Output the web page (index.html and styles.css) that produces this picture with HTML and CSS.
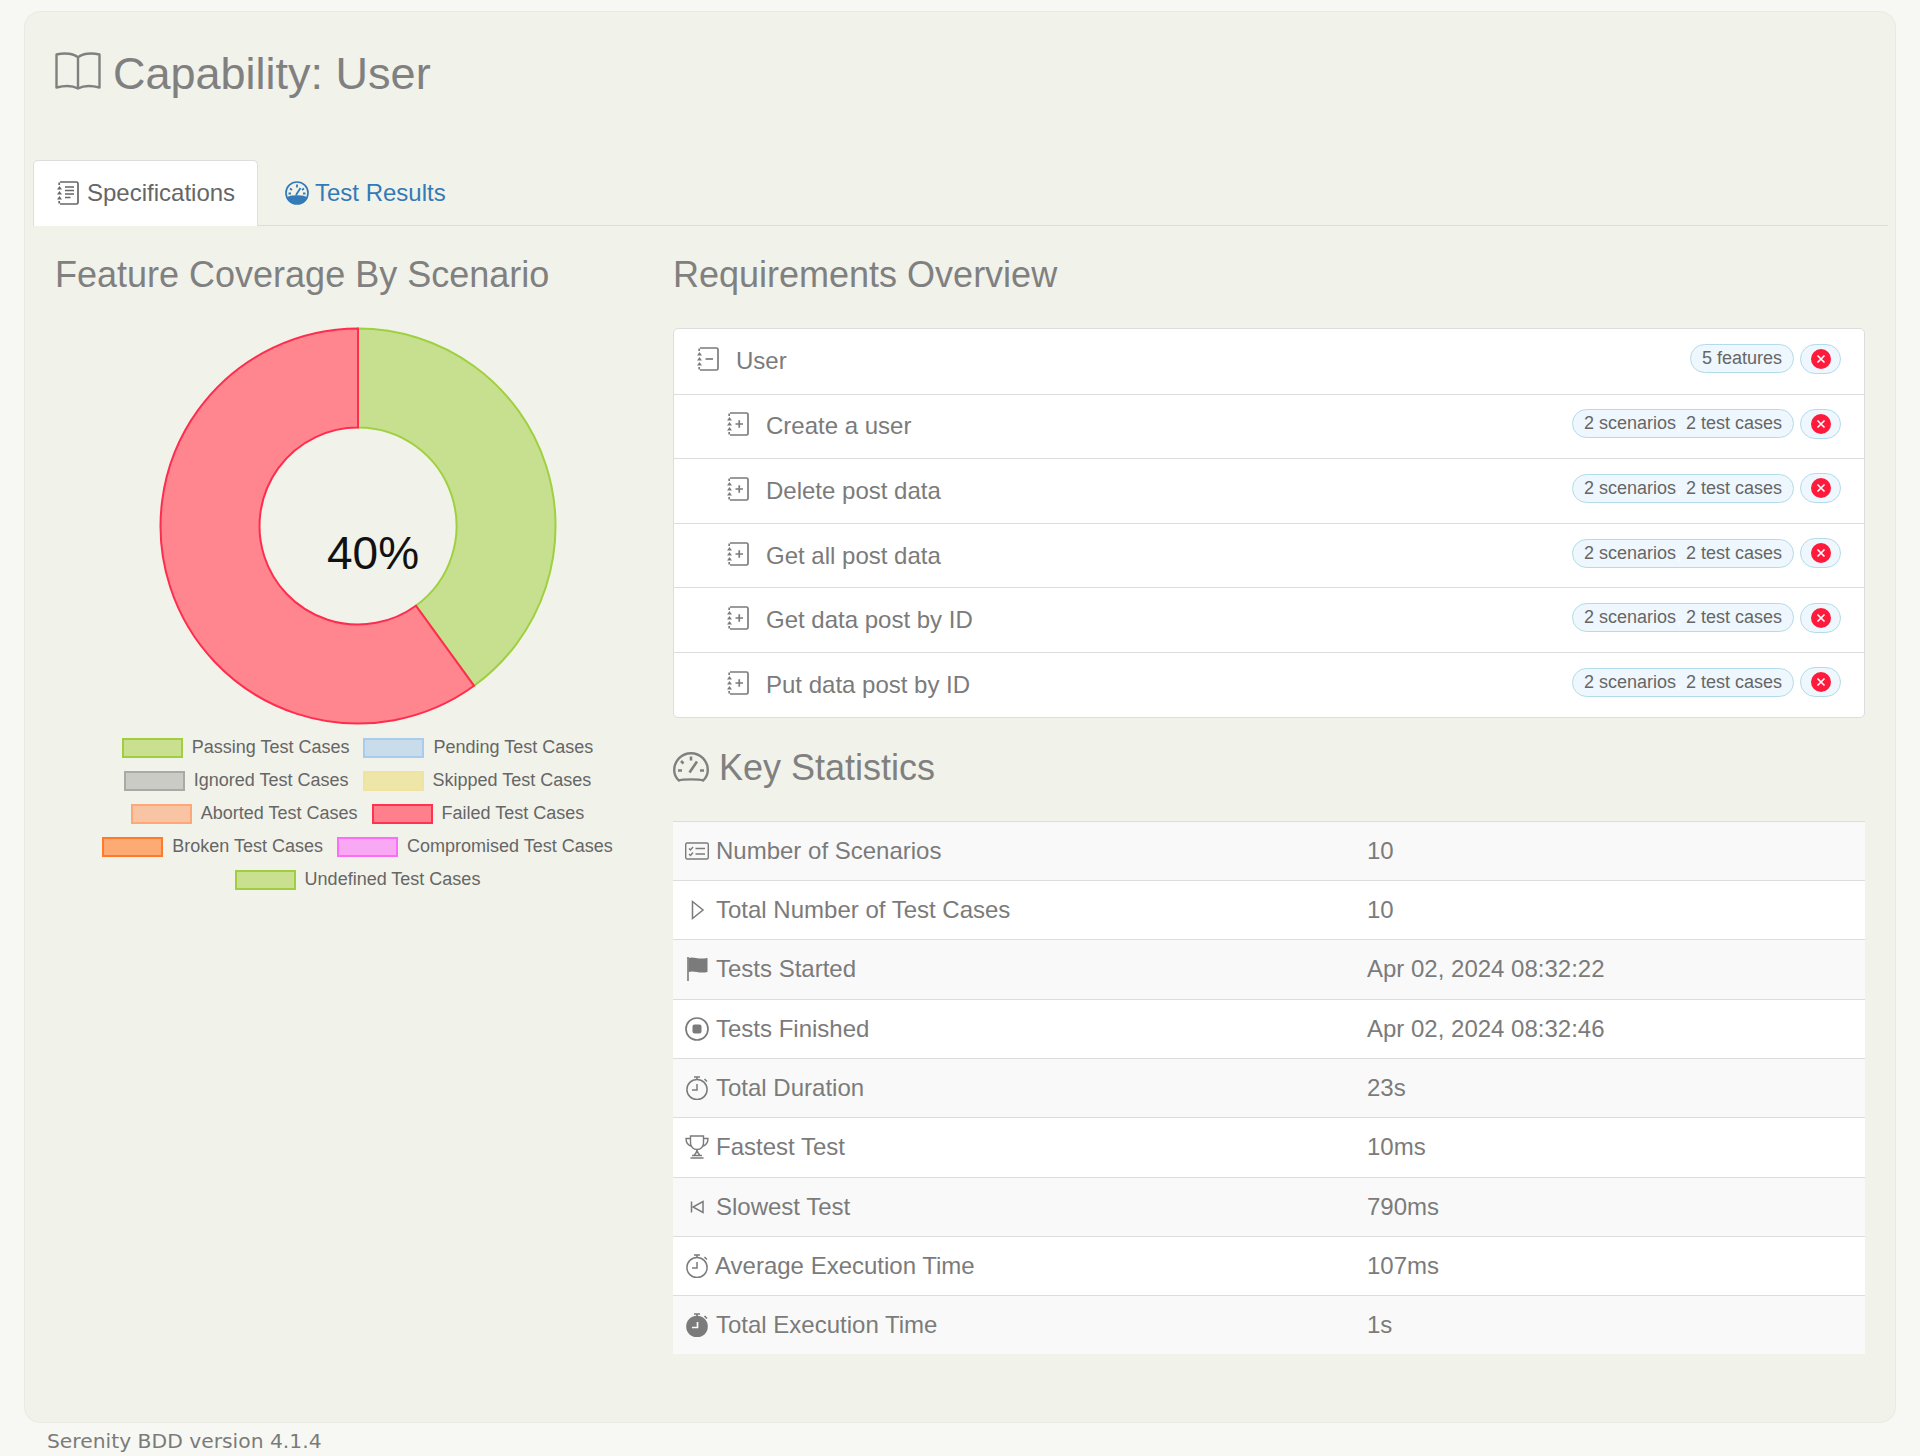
FILE: index.html

```html
<!DOCTYPE html>
<html lang="en">

<head>
    <meta charset="UTF-8">
    <meta name="viewport" content="width=device-width, initial-scale=1.0">
    <title>Capability: User</title>
    <link rel="stylesheet" href="styles.css">
</head>

<body>
    <svg class="sprite" width="0" height="0">
        <symbol id="bookBase" viewBox="0 0 22 24">
            <path d="M3 1h16.500A1.500 1.500 0 0 1 21 2.500v19a1.500 1.500 0 0 1-1.500 1.500H3M2.200 1.500v2.500M2.200 20v2.500" fill="none" stroke="currentColor" stroke-width="1.700" />
            <path d="M0 8.500l2.500-3.500 2.500 3.500zM0 13.500l2.500-3.500 2.500 3.500zM0 18.500l2.500-3.500 2.500 3.500z" fill="currentColor" />
        </symbol>
        <symbol id="bookPlus" viewBox="0 0 22 24">
            <use href="#bookBase" width="22" height="24" />
            <path d="M8.500 12h7.500M12.250 8.250v7.500" fill="none" stroke="currentColor" stroke-width="1.700" />
        </symbol>
        <symbol id="bookMinus" viewBox="0 0 22 24">
            <use href="#bookBase" width="22" height="24" />
            <path d="M8.500 12h7.500" fill="none" stroke="currentColor" stroke-width="1.700" />
        </symbol>
        <symbol id="failed" viewBox="0 0 20 20">
            <circle cx="10" cy="10" r="10" fill="#ff1a3c" />
            <path d="M6.500 6.500l7 7M13.500 6.500l-7 7" stroke="#fff" stroke-width="1.600" />
        </symbol>
        <symbol id="stopwatch" viewBox="0 0 24 24">
            <circle cx="12" cy="13.500" r="10.100" fill="none" stroke="currentColor" stroke-width="1.500" />
            <path d="M12 8v6H7M9 1h6M12 1v2.500M19.500 3l2.500 2.500" fill="none" stroke="currentColor" stroke-width="1.500" />
        </symbol>
    </svg>

    <main class="panel">
        <h1 class="page-title">
            <svg class="icon-title" viewBox="0 0 46 38">
                <path d="M23 5.500C19 1.500 10 0.500 1.500 2.500v33c8-2 16-2 21.500 1 5.500-3 13.500-3 21.500-1v-33C36 0.500 27 1.500 23 5.500zm0 0v31" fill="none" stroke="currentColor" stroke-width="2.400" stroke-linejoin="round" />
            </svg>
            Capability: User
        </h1>

        <nav class="tabs">
            <a class="tab active">
                <svg class="icon-notes" viewBox="0 0 22 24">
                    <path d="M3 1h16.500A1.500 1.500 0 0 1 21 2.500v19a1.500 1.500 0 0 1-1.500 1.500H3M2.200 1.500v2.500M2.200 20v2.500" fill="none" stroke="currentColor" stroke-width="1.700" />
                    <path d="M0 8.500l2.500-3.500 2.500 3.500zM0 13.500l2.500-3.500 2.500 3.500zM0 18.500l2.500-3.500 2.500 3.500z" fill="currentColor" />
                    <path d="M8 6h9M8 9.500h9M8 13h9M8 16.500h5.500" fill="none" stroke="currentColor" stroke-width="1.500" />
                </svg>
                Specifications
            </a>
            <a class="tab">
                <svg class="icon-tab" viewBox="0 0 24 24">
                    <circle cx="12" cy="12" r="11" fill="none" stroke="currentColor" stroke-width="1.700" />
                    <path d="M1.500 16.500c3-3 18-3 21 0A11 11 0 0 1 12 23 11 11 0 0 1 1.500 16.500z" fill="currentColor" />
                    <path d="M12 3.500v3M5 7.500l2 1.500M19 7.500l-2 1.500M3.500 12.500H6M20.500 12.500H18M11 14l4.500-7" fill="none" stroke="currentColor" stroke-width="1.800" />
                </svg>
                Test Results
            </a>
        </nav>

        <div class="columns">
            <section class="coverage">
                <h2>Feature Coverage By Scenario</h2>
                <div class="chart">
                    <svg width="400" height="400" viewBox="0 0 400 400">
                        <path class="slice-pass" d="M200 2.500A197.500 197.500 0 0 1 316.100 359.800L257.900 279.700A98.500 98.500 0 0 0 200 101.500z" />
                        <path class="slice-fail" d="M316.100 359.800A197.500 197.500 0 1 1 200 2.500V101.500A98.500 98.500 0 1 0 257.900 279.700z" />
                    </svg>
                    <span class="chart-label">40%</span>
                </div>
                <div class="legend">
                    <div class="legend-row">
                        <span class="legend-item"><i class="swatch passing"></i>Passing Test Cases</span>
                        <span class="legend-item"><i class="swatch pending"></i>Pending Test Cases</span>
                    </div>
                    <div class="legend-row">
                        <span class="legend-item"><i class="swatch ignored"></i>Ignored Test Cases</span>
                        <span class="legend-item"><i class="swatch skipped"></i>Skipped Test Cases</span>
                    </div>
                    <div class="legend-row">
                        <span class="legend-item"><i class="swatch aborted"></i>Aborted Test Cases</span>
                        <span class="legend-item"><i class="swatch failed"></i>Failed Test Cases</span>
                    </div>
                    <div class="legend-row">
                        <span class="legend-item"><i class="swatch broken"></i>Broken Test Cases</span>
                        <span class="legend-item"><i class="swatch compromised"></i>Compromised Test Cases</span>
                    </div>
                    <div class="legend-row">
                        <span class="legend-item"><i class="swatch passing"></i>Undefined Test Cases</span>
                    </div>
                </div>
            </section>

            <section class="overview">
                <h2>Requirements Overview</h2>
                <ul class="tree">
                    <li class="tree-row">
                        <svg class="icon-book"><use href="#bookMinus" /></svg>
                        <span class="tree-name">User</span>
                        <span class="pill">5 features</span>
                        <span class="pill pill-status"><svg class="icon-failed"><use href="#failed" /></svg></span>
                    </li>
                    <li class="tree-row child">
                        <svg class="icon-book"><use href="#bookPlus" /></svg>
                        <span class="tree-name">Create a user</span>
                        <span class="pill">2 scenarios<span class="comma">, </span>2 test cases</span>
                        <span class="pill pill-status"><svg class="icon-failed"><use href="#failed" /></svg></span>
                    </li>
                    <li class="tree-row child">
                        <svg class="icon-book"><use href="#bookPlus" /></svg>
                        <span class="tree-name">Delete post data</span>
                        <span class="pill">2 scenarios<span class="comma">, </span>2 test cases</span>
                        <span class="pill pill-status"><svg class="icon-failed"><use href="#failed" /></svg></span>
                    </li>
                    <li class="tree-row child">
                        <svg class="icon-book"><use href="#bookPlus" /></svg>
                        <span class="tree-name">Get all post data</span>
                        <span class="pill">2 scenarios<span class="comma">, </span>2 test cases</span>
                        <span class="pill pill-status"><svg class="icon-failed"><use href="#failed" /></svg></span>
                    </li>
                    <li class="tree-row child">
                        <svg class="icon-book"><use href="#bookPlus" /></svg>
                        <span class="tree-name">Get data post by ID</span>
                        <span class="pill">2 scenarios<span class="comma">, </span>2 test cases</span>
                        <span class="pill pill-status"><svg class="icon-failed"><use href="#failed" /></svg></span>
                    </li>
                    <li class="tree-row child">
                        <svg class="icon-book"><use href="#bookPlus" /></svg>
                        <span class="tree-name">Put data post by ID</span>
                        <span class="pill">2 scenarios<span class="comma">, </span>2 test cases</span>
                        <span class="pill pill-status"><svg class="icon-failed"><use href="#failed" /></svg></span>
                    </li>
                </ul>

                <h2 class="stats-title">
                    <svg class="icon-gauge" viewBox="0 0 36 30">
                        <path d="M6 28.500C3 26 1.200 22 1.200 18a16.800 16.800 0 0 1 33.600 0c0 4-1.800 8-4.800 10.500-3-1.500-21-1.500-24 0z" fill="none" stroke="currentColor" stroke-width="2.400" />
                        <path d="M18 4.500v4M8 9l2.500 2.500M5 18.500h4M27 18.500h4M16.500 20.500L24 9.500" fill="none" stroke="currentColor" stroke-width="2.600" />
                    </svg>
                    Key Statistics
                </h2>
                <div class="stats">
                    <div class="stat-row">
                        <span class="stat-name">
                            <svg class="icon-stat" viewBox="0 0 24 24">
                                <rect x="0.700" y="4" width="22.600" height="16" rx="1.500" fill="none" stroke="currentColor" stroke-width="1.400" />
                                <path d="M4 9.500l1.500 1.500 2.500-3M4 15l1.500 1.500 2.500-3M10.500 9.500h9.500M10.500 15h9.500" fill="none" stroke="currentColor" stroke-width="1.400" />
                            </svg>
                            Number of Scenarios
                        </span>
                        <span>10</span>
                    </div>
                    <div class="stat-row">
                        <span class="stat-name">
                            <svg class="icon-stat" viewBox="0 0 24 24">
                                <path d="M7.500 3.500L18 12 7.500 20.500z" fill="none" stroke="currentColor" stroke-width="1.500" />
                            </svg>
                            Total Number of Test Cases
                        </span>
                        <span>10</span>
                    </div>
                    <div class="stat-row">
                        <span class="stat-name">
                            <svg class="icon-stat" viewBox="0 0 24 24">
                                <path d="M3 0v24" stroke="currentColor" stroke-width="1.600" />
                                <path d="M3.500 1c6-2 8 2 19 0v14c-9 2-13-2-19 0z" fill="currentColor" />
                            </svg>
                            Tests Started
                        </span>
                        <span>Apr 02, 2024 08:32:22</span>
                    </div>
                    <div class="stat-row">
                        <span class="stat-name">
                            <svg class="icon-stat" viewBox="0 0 24 24">
                                <circle cx="12" cy="12" r="11" fill="none" stroke="currentColor" stroke-width="1.700" />
                                <rect x="7.500" y="7.500" width="9" height="9" rx="2" fill="currentColor" />
                            </svg>
                            Tests Finished
                        </span>
                        <span>Apr 02, 2024 08:32:46</span>
                    </div>
                    <div class="stat-row">
                        <span class="stat-name">
                            <svg class="icon-stat"><use href="#stopwatch" /></svg>
                            Total Duration
                        </span>
                        <span>23s</span>
                    </div>
                    <div class="stat-row">
                        <span class="stat-name">
                            <svg class="icon-stat" viewBox="0 0 24 24">
                                <path d="M5.500 1h13v7c0 4-3 6.500-6.500 6.500S5.500 12 5.500 8zM5.500 3.500H1c0 4 2 7 6 8M18.500 3.500H23c0 4-2 7-6 8M12 14.500c0 3-1.500 4.500-3 6h6c-1.500-1.500-3-3-3-6zM5.500 23h13M7 20.500h10" fill="none" stroke="currentColor" stroke-width="1.400" />
                            </svg>
                            Fastest Test
                        </span>
                        <span>10ms</span>
                    </div>
                    <div class="stat-row">
                        <span class="stat-name">
                            <svg class="icon-stat" viewBox="0 0 24 24">
                                <path d="M6.500 6.500v11" stroke="currentColor" stroke-width="1.500" />
                                <path d="M18 6.500v11l-10-5.500z" fill="none" stroke="currentColor" stroke-width="1.500" />
                            </svg>
                            Slowest Test
                        </span>
                        <span>790ms</span>
                    </div>
                    <div class="stat-row">
                        <span class="stat-name tight">
                            <svg class="icon-stat"><use href="#stopwatch" /></svg>
                            Average Execution Time
                        </span>
                        <span>107ms</span>
                    </div>
                    <div class="stat-row">
                        <span class="stat-name">
                            <svg class="icon-stat" viewBox="0 0 24 24">
                                <circle cx="12" cy="13.500" r="10.800" fill="currentColor" />
                                <path d="M9 1h6M12 1v2.500M19.500 3l2.500 2.500" fill="none" stroke="currentColor" stroke-width="1.700" />
                                <path d="M12.500 9v5.500H7" fill="none" stroke="#f9f9f9" stroke-width="1.700" />
                            </svg>
                            Total Execution Time
                        </span>
                        <span>1s</span>
                    </div>
                </div>
            </section>
        </div>
    </main>

    <footer class="version">Serenity BDD version 4.1.4</footer>
</body>

</html>
```

FILE: styles.css

```css
body {
    margin: 0;
    background-color: #f7f8f3;
    color: #7b7b7b;
    font-family: "Liberation Sans", Arial, sans-serif;
}

h1,
h2 {
    margin: 0;
    font-weight: 400;
    color: #808080;
}

ul {
    margin: 0;
    padding: 0;
    list-style: none;
}

.sprite {
    position: absolute;
}

.panel {
    box-sizing: border-box;
    height: 1412px;
    margin: 11px 24px 0;
    padding: 0 7px 0 8px;
    background: #f1f2ea;
    border: 1px solid #e9eae2;
    border-radius: 16px;
}

.page-title {
    display: flex;
    align-items: center;
    gap: 12px;
    height: 148px;
    padding: 0 0 25px 22px;
    box-sizing: border-box;
    font-size: 45px;
}

.icon-title {
    width: 46px;
    height: 38px;
    margin-top: -6px;
}

/* tabs */
.tabs {
    display: flex;
    height: 65px;
    border-bottom: 1px solid #dcdfd8;
}

.tab {
    display: flex;
    align-items: center;
    gap: 6px;
    box-sizing: border-box;
    height: 65px;
    padding: 0 23px 0 27px;
    font-size: 24px;
    color: #337ab7;
}

.tab.active {
    width: 225px;
    height: 66px;
    gap: 8px;
    padding: 0 0 2px 23px;
    color: #666;
    background: #fff;
    border: 1px solid #ddd;
    border-bottom: 0;
    border-radius: 5px 5px 0 0;
}

.icon-tab {
    width: 24px;
    height: 24px;
}

.icon-notes {
    width: 22px;
    height: 24px;
}

/* two columns under the tabs */
.columns {
    display: grid;
    grid-template-columns: 606px 1192px;
    column-gap: 12px;
    padding: 28px 0 0 22px;
}

.coverage h2,
.overview h2 {
    height: 73px;
    font-size: 36px;
    line-height: 41px;
}

.overview h2 {
    height: 74px;
}

/* doughnut */
.chart {
    position: relative;
    width: 400px;
    height: 400px;
    margin: -1px auto 0;
}

.chart svg {
    display: block;
}

.slice-pass {
    fill: #c7e08f;
    stroke: #9fd03f;
    stroke-width: 2;
}

.slice-fail {
    fill: #ff858f;
    stroke: #ff2d4d;
    stroke-width: 2;
}

.chart-label {
    position: absolute;
    left: 169px;
    top: 199px;
    font-size: 46px;
    line-height: 56px;
    color: #111;
}

.legend {
    margin-top: 5px;
    padding-right: 1px;
    font-size: 18px;
    color: #666;
}

.legend-row {
    display: flex;
    justify-content: center;
    gap: 14px;
    height: 33px;
    align-items: center;
}

.legend-item {
    display: flex;
    align-items: center;
    gap: 9px;
}

.swatch {
    box-sizing: border-box;
    width: 61px;
    height: 20px;
    border: 2px solid;
}

.passing { background: #c8e08f; border-color: #9fcf3f; }
.pending { background: #c9dcea; border-color: #a8cbf0; }
.ignored { background: #cacbc5; border-color: #a9a9a5; }
.skipped { background: #eee5a8; border-color: #f0e3a0; }
.aborted { background: #f9c4a4; border-color: #fea878; }
.failed { background: #ff808c; border-color: #ff3350; }
.broken { background: #fdaa74; border-color: #ff7a2a; }
.compromised { background: #f9a9f3; border-color: #ff6cf8; }

/* requirements tree */
.tree {
    background: #fff;
    border: 1px solid #ddd;
    border-radius: 5px;
}

.tree-row {
    display: flex;
    align-items: center;
    box-sizing: border-box;
    height: 64.600px;
    padding: 0 23px;
    font-size: 24px;
    gap: 6px;
}

.tree-row + .tree-row {
    border-top: 1px solid #ddd;
}

.tree-row.child {
    padding-left: 53px;
}

.icon-book {
    width: 22px;
    height: 24px;
    margin: -4px 11px 0 0;
}

.tree-name {
    flex: 1;
}

.pill {
    display: flex;
    align-items: center;
    height: 29px;
    margin-top: -5px;
    padding: 0 11px;
    box-sizing: border-box;
    font-size: 18px;
    color: #666;
    background: #eef7fd;
    border: 1px solid #b4dbe9;
    border-radius: 15px;
}

.comma {
    color: #fff;
    white-space: pre;
}

.pill-status {
    width: 41px;
    height: 30px;
    justify-content: center;
    padding: 0;
}

.icon-failed {
    width: 20px;
    height: 20px;
}

/* key statistics */
.overview .stats-title {
    display: flex;
    align-items: center;
    gap: 10px;
    height: 99.200px;
    padding-bottom: 4px;
}

.icon-gauge {
    width: 36px;
    height: 30px;
}

.stat-row {
    display: grid;
    grid-template-columns: 694px 1fr;
    align-items: center;
    box-sizing: border-box;
    height: 59.300px;
    border-top: 1px solid #ddd;
    font-size: 24px;
    background: #fff;
}

.stat-row:nth-child(odd) {
    background: #f9f9f9;
}

.stat-name {
    display: flex;
    align-items: center;
    gap: 7px;
    padding-left: 12px;
}

.stat-name.tight {
    gap: 6px;
}

.icon-stat {
    width: 24px;
    height: 24px;
    flex: none;
}

.version {
    padding: 6px 0 0 47px;
    font-family: "DejaVu Sans", Verdana, sans-serif;
    font-size: 20.300px;
    color: #7b7b7b;
}
```
